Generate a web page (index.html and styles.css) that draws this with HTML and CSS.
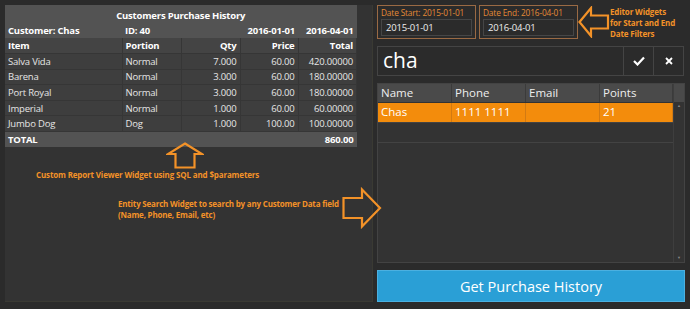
FILE: index.html
```html
<!DOCTYPE html>
<html>
<head>
    <meta charset="UTF-8">
    <title>Customers Purchase History</title>
    <link rel="stylesheet" href="styles.css">
</head>
<body>
    <div class="screen">
        <div class="report-panel">
            <table class="report">
                <tr class="title-row"><td colspan="5" class="center">Customers Purchase History</td></tr>
                <tr class="info-row">
                    <td>Customer: Chas</td>
                    <td>ID: 40</td>
                    <td colspan="2" class="num">2016-01-01</td>
                    <td class="num">2016-04-01</td>
                </tr>
                <tr class="head-row">
                    <td class="c-item">Item</td>
                    <td class="c-portion">Portion</td>
                    <td class="num c-qty">Qty</td>
                    <td class="num c-price">Price</td>
                    <td class="num">Total</td>
                </tr>
                <tr><td>Salva Vida</td><td>Normal</td><td class="num">7.000</td><td class="num">60.00</td><td class="num">420.00000</td></tr>
                <tr><td>Barena</td><td>Normal</td><td class="num">3.000</td><td class="num">60.00</td><td class="num">180.00000</td></tr>
                <tr><td>Port Royal</td><td>Normal</td><td class="num">3.000</td><td class="num">60.00</td><td class="num">180.00000</td></tr>
                <tr><td>Imperial</td><td>Normal</td><td class="num">1.000</td><td class="num">60.00</td><td class="num">60.00000</td></tr>
                <tr><td>Jumbo Dog</td><td>Dog</td><td class="num">1.000</td><td class="num">100.00</td><td class="num">100.00000</td></tr>
                <tr class="total-row"><td colspan="4">TOTAL</td><td class="num">860.00</td></tr>
            </table>
        </div>

        <div class="side">
            <div class="date-row">
                <div class="date-editor">
                    <div class="date-label">Date Start: 2015-01-01</div>
                    <div class="date-input">2015-01-01</div>
                </div>
                <div class="date-editor">
                    <div class="date-label">Date End: 2016-04-01</div>
                    <div class="date-input">2016-04-01</div>
                </div>
            </div>

            <div class="search-row">
                <div class="search-input">cha</div>
                <div class="icon-btn">
                    <svg width="12" height="10" viewBox="0 0 12 10"><polyline points="1,5 4.5,8.5 11,1.5" fill="none" stroke="#fff" stroke-width="2.2"/></svg>
                </div>
                <div class="icon-btn">
                    <svg width="8" height="8" viewBox="0 0 8 8"><path d="M1 1L7 7M7 1L1 7" stroke="#fff" stroke-width="1.8"/></svg>
                </div>
            </div>

            <div class="grid">
                <div class="grid-main">
                    <div class="grid-head">
                        <div class="cell">Name</div>
                        <div class="cell">Phone</div>
                        <div class="cell">Email</div>
                        <div class="cell">Points</div>
                    </div>
                    <div class="grid-row selected">
                        <div class="cell">Chas</div>
                        <div class="cell">1111 1111</div>
                        <div class="cell"></div>
                        <div class="cell">21</div>
                    </div>
                    <div class="grid-row empty"></div>
                </div>
                <div class="scrollbar">
                    <div class="scroll-cap"></div>
                    <div class="scroll-arrow">&#9650;</div>
                    <div class="scroll-track"></div>
                    <div class="scroll-arrow">&#9660;</div>
                </div>
            </div>

            <button class="action-btn">Get Purchase History</button>
        </div>

        <!-- callouts -->
        <svg class="arrow arrow-up" width="38" height="27" viewBox="0 0 38 27">
            <path d="M19 1.5L36 12H28.5V25.5H9.5V12H2Z" fill="none" stroke="#f39228" stroke-width="2.2" stroke-linejoin="miter"/>
        </svg>
        <div class="note note-report">Custom Report Viewer Widget using SQL and $parameters</div>

        <svg class="arrow arrow-right" width="40" height="42" viewBox="0 0 40 42">
            <path d="M38 21L20 2.5V11H1.5V31H20V39.5Z" fill="none" stroke="#f39228" stroke-width="2.2"/>
        </svg>
        <div class="note note-search">Entity Search Widget to search by any Customer Data field<br>(Name, Phone, Email, etc)</div>

        <svg class="arrow arrow-left" width="32" height="32" viewBox="0 0 32 32">
            <path d="M1.5 16L13 2V9.5H30V22.5H13V30Z" fill="none" stroke="#f39228" stroke-width="2.2"/>
        </svg>
        <div class="note note-editor">Editor Widgets<br>for Start and End<br>Date Filters</div>
    </div>
</body>
</html>
```

FILE: styles.css
```css
* {
    box-sizing: border-box;
    margin: 0;
    padding: 0;
}

body {
    background-color: #2b2b2b;
    color: #fff;
    font-family: "Open Sans", "Noto Sans", sans-serif;
}

.screen {
    position: relative;
    display: flex;
    gap: 4px;
    padding: 5px 5px 7px 5px;
    height: 309px;
}

.report-panel {
    width: 368px;
    background-color: #333;
    border: 1px solid #3a3a33;
    border-top: none;
    border-left: none;
}

.report {
    width: 352px;
    border-collapse: collapse;
    font-size: 9.5px;
    letter-spacing: -0.2px;
    color: #e6e6e6;
}

.report td {
    height: 15.6px;
    padding: 0 3px;
    background-color: #3e3e3e;
    border-bottom: 1px solid #363636;
    border-right: 1px solid #363636;
    white-space: nowrap;
}

.report .num {
    text-align: right;
}

.report .center {
    text-align: center;
}

.title-row td,
.info-row td,
.total-row td {
    background-color: #535353;
    border-right: none;
    border-bottom: none;
    color: #fff;
    font-weight: bold;
}

.title-row td {
    height: 18px;
    padding-top: 3px;
}

.info-row td {
    height: 15px;
}

.head-row td {
    background-color: #444;
    color: #fff;
    font-weight: bold;
}

.c-item { width: 117px; }
.c-portion { width: 59px; }
.c-qty { width: 59px; }
.c-price { width: 58px; }

.side {
    width: 308px;
    display: flex;
    flex-direction: column;
}

.date-row {
    display: flex;
    gap: 3px;
}

.date-editor {
    width: 99px;
    height: 34px;
    border: 1px solid #9a6a44;
    padding: 2px 3px 3px 3px;
}

.date-label {
    font-size: 8.3px;
    color: #e58a36;
    line-height: 10px;
    letter-spacing: -0.15px;
    white-space: nowrap;
}

.date-input {
    margin-top: 1px;
    height: 17px;
    border: 1px solid #464646;
    font-size: 9.5px;
    letter-spacing: -0.2px;
    line-height: 15px;
    padding-left: 4px;
    color: #eee;
}

.search-row {
    display: flex;
    margin-top: 7px;
    height: 30px;
}

.search-input {
    width: 247px;
    border: 1px solid #444;
    font-size: 21px;
    line-height: 26px;
    padding-left: 5px;
}

.icon-btn {
    width: 30px;
    border: 1px solid #444;
    border-left: none;
    display: flex;
    align-items: center;
    justify-content: center;
}

.grid {
    margin-top: 7px;
    height: 181px;
    display: flex;
    border: 1px solid #434343;
    background-color: #333;
}

.grid-main {
    flex: 1;
}

.grid-head,
.grid-row {
    display: grid;
    grid-template-columns: 74px 74px 74px 1fr;
    font-size: 11.5px;
}

.grid-head {
    height: 18px;
    background-color: #4a4a4a;
    line-height: 18px;
    color: #eee;
}

.grid-head .cell {
    border-right: 1px solid #3b3b3b;
    padding-left: 3px;
}

.grid-row {
    height: 20px;
    border-bottom: 1px solid #434343;
    line-height: 18px;
}

.grid-row.selected {
    background-color: #f38c0c;
    margin-top: 1px;
}

.grid-row.selected .cell {
    border-right: 1px solid #d27a12;
    padding-left: 3px;
}

.scrollbar {
    width: 11px;
    display: flex;
    flex-direction: column;
    border-left: 1px solid #3e3e3e;
}

.scroll-cap {
    height: 18px;
    background-color: #4a4a4a;
}

.scroll-arrow {
    font-size: 4px;
    color: #888;
    text-align: center;
    height: 8px;
    line-height: 8px;
}

.scroll-track {
    flex: 1;
}

.action-btn {
    margin-top: 7px;
    height: 32px;
    background-color: #2a9fd6;
    border: 1px solid #4bb0e0;
    color: #fff;
    font-family: "Open Sans", "Noto Sans", sans-serif;
    font-size: 14.5px;
}

.arrow {
    position: absolute;
}

.arrow-up {
    left: 166px;
    top: 142px;
}

.arrow-right {
    left: 342px;
    top: 187px;
}

.arrow-left {
    left: 578px;
    top: 6px;
}

.note {
    position: absolute;
    color: #f39228;
    font-weight: bold;
    font-size: 8px;
    line-height: 11px;
    white-space: nowrap;
    letter-spacing: -0.15px;
}

.note-report {
    left: 36px;
    top: 169px;
}

.note-search {
    left: 118px;
    top: 198px;
    letter-spacing: -0.2px;
}

.note-editor {
    left: 610px;
    top: 6px;
}
```
